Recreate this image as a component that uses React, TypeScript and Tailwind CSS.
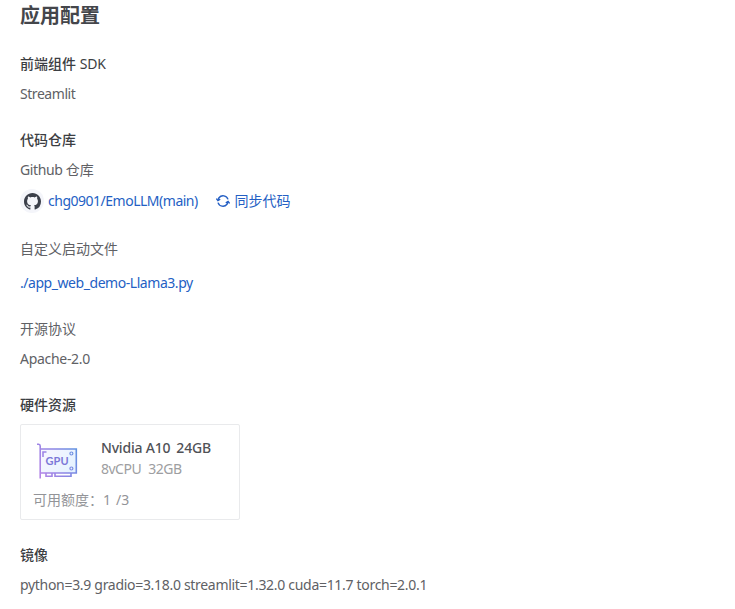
import React from "react";

const Row = ({ className = "", children }: { className?: string; children: React.ReactNode }) => (
  <div className={`h-5 whitespace-nowrap ${className}`}>{children}</div>
);

const GithubMark = () => (
  <span className="flex h-6 w-6 items-center justify-center rounded-full bg-[#f4f5fa]">
    <svg width="17" height="17" viewBox="0 0 16 16" fill="#3b3f4a">
      <path d="M8 0C3.58 0 0 3.58 0 8c0 3.54 2.29 6.53 5.47 7.59.4.07.55-.17.55-.38 0-.19-.01-.82-.01-1.49-2.01.37-2.53-.49-2.69-.94-.09-.23-.48-.94-.82-1.13-.28-.15-.68-.52-.01-.53.63-.01 1.08.58 1.23.82.72 1.21 1.87.87 2.33.66.07-.52.28-.87.51-1.07-1.78-.2-3.64-.89-3.64-3.95 0-.87.31-1.59.82-2.15-.08-.2-.36-1.02.08-2.12 0 0 .67-.21 2.2.82.64-.18 1.32-.27 2-.27s1.36.09 2 .27c1.53-1.04 2.2-.82 2.2-.82.44 1.1.16 1.92.08 2.12.51.56.82 1.27.82 2.15 0 3.07-1.87 3.75-3.65 3.95.29.25.54.73.54 1.48 0 1.07-.01 1.93-.01 2.2 0 .21.15.46.55.38A8.01 8.01 0 0 0 16 8c0-4.42-3.58-8-8-8z" />
    </svg>
  </span>
);

const SyncIcon = () => (
  <svg width="14" height="14" viewBox="0 0 14 14" fill="none" stroke="#245fc4" strokeWidth="1.4">
    <path d="M12 5.4A5.2 5.2 0 0 0 3 3.8Q2.2 4.8 2 6.2M2 8.6A5.2 5.2 0 0 0 11 10.2Q11.8 9.2 12 7.8" />
    <path d="M.3 4.6 1.9 6.6 4.2 5.2M13.7 9.4 12.1 7.4 9.8 8.8" />
  </svg>
);

const GpuIcon = () => (
  <svg width="42" height="36" viewBox="0 0 42 36" fill="none">
    <defs>
      <linearGradient id="edge" x1="0" y1="28" x2="42" y2="8" gradientUnits="userSpaceOnUse">
        <stop stopColor="#b585e6" />
        <stop offset="0.55" stopColor="#8a86e4" />
        <stop offset="1" stopColor="#5f93e0" />
      </linearGradient>
      <linearGradient id="board" x1="4" y1="6" x2="40" y2="30" gradientUnits="userSpaceOnUse">
        <stop stopColor="#f8f6ff" />
        <stop offset="1" stopColor="#e3f2ff" />
      </linearGradient>
    </defs>
    <path d="M4 6H39.3V30H4Z" fill="url(#board)" />
    <g stroke="url(#edge)" strokeWidth="1.6">
      <path d="M0 1.2H1.6Q3.2 1.4 3.2 3V35.5" />
      <path d="M3.2 6H39.3V30H3.2" />
      <path d="M6 14V9H9.5" />
      <path d="M9 30V33.3H15V30M18 30V33.3H34V30" />
      <circle cx="34.4" cy="10.5" r="1.5" strokeWidth="1.2" />
      <circle cx="34.4" cy="25.5" r="1.5" strokeWidth="1.2" />
    </g>
    <text x="8.6" y="22.2" fontSize="11" fontWeight="700" fill="#7c78d8" fontFamily="Lato, sans-serif">
      GPU
    </text>
  </svg>
);

export default function App() {
  return (
    <main className="flex h-[609px] w-[735px] flex-col overflow-hidden bg-white pl-5 font-['Noto_Sans','Noto_Sans_CJK_SC',sans-serif] text-[14px] leading-5 text-[#606165]">
      <h1 className="h-[30px] pt-px text-[20px] leading-[30px] font-bold text-[#44464b]">应用配置</h1>
      <Row className="mt-6 font-medium text-[#3c3e43]">
        前端组件 <span className="font-normal tracking-[-0.1px]">SDK</span>
      </Row>
      <Row className="mt-2.5 tracking-[-0.45px]">Streamlit</Row>

      <Row className="mt-[26px] font-medium text-[#3c3e43]">代码仓库</Row>
      <Row className="mt-2.5">
        <span className="tracking-[-0.37px]">Github </span>仓库
      </Row>
      <Row className="mt-[11px] flex items-center text-[#245fc4]">
        <GithubMark />
        <a className="ml-1 w-[167.5px] tracking-[-0.49px]">chg0901/EmoLLM(main)</a>
        <SyncIcon />
        <a className="ml-[5px]">同步代码</a>
      </Row>

      <Row className="mt-7">自定义启动文件</Row>
      <Row className="mt-3.5 tracking-[-0.45px] text-[#245fc4]">./app_web_demo-Llama3.py</Row>

      <Row className="mt-[26px]">开源协议</Row>
      <Row className="mt-2.5 tracking-[-0.3px]">Apache-2.0</Row>

      <Row className="mt-[26px] font-medium text-[#3c3e43]">硬件资源</Row>
      <section className="mt-[9px] h-24 w-[220px] shrink-0 rounded-[2px] border border-[#e9eaec] pt-[13px] pl-3">
        <div className="flex">
          <div className="w-[68px] pt-[5px] pl-1">
            <GpuIcon />
          </div>
          <div className="whitespace-nowrap">
            <div className="flex h-[21px] gap-[6px] font-medium tracking-[-0.2px] text-[#505257]">
              <span>Nvidia A10</span>
              <span>24GB</span>
            </div>
            <div className="flex h-[21px] gap-[7px] tracking-[-0.5px] text-[#9d9ea1]">
              <span>8vCPU</span>
              <span>32GB</span>
            </div>
          </div>
        </div>
        <Row className="mt-[10px] flex text-[#939498]">
          可用额度：<span className="w-[13px]">1</span>
          <span>/3</span>
        </Row>
      </section>

      <Row className="mt-[25px] font-medium text-[#3c3e43]">镜像</Row>
      <Row className="mt-2.5 tracking-[-0.305px]">python=3.9 gradio=3.18.0 streamlit=1.32.0 cuda=11.7 torch=2.0.1</Row>
    </main>
  );
}
